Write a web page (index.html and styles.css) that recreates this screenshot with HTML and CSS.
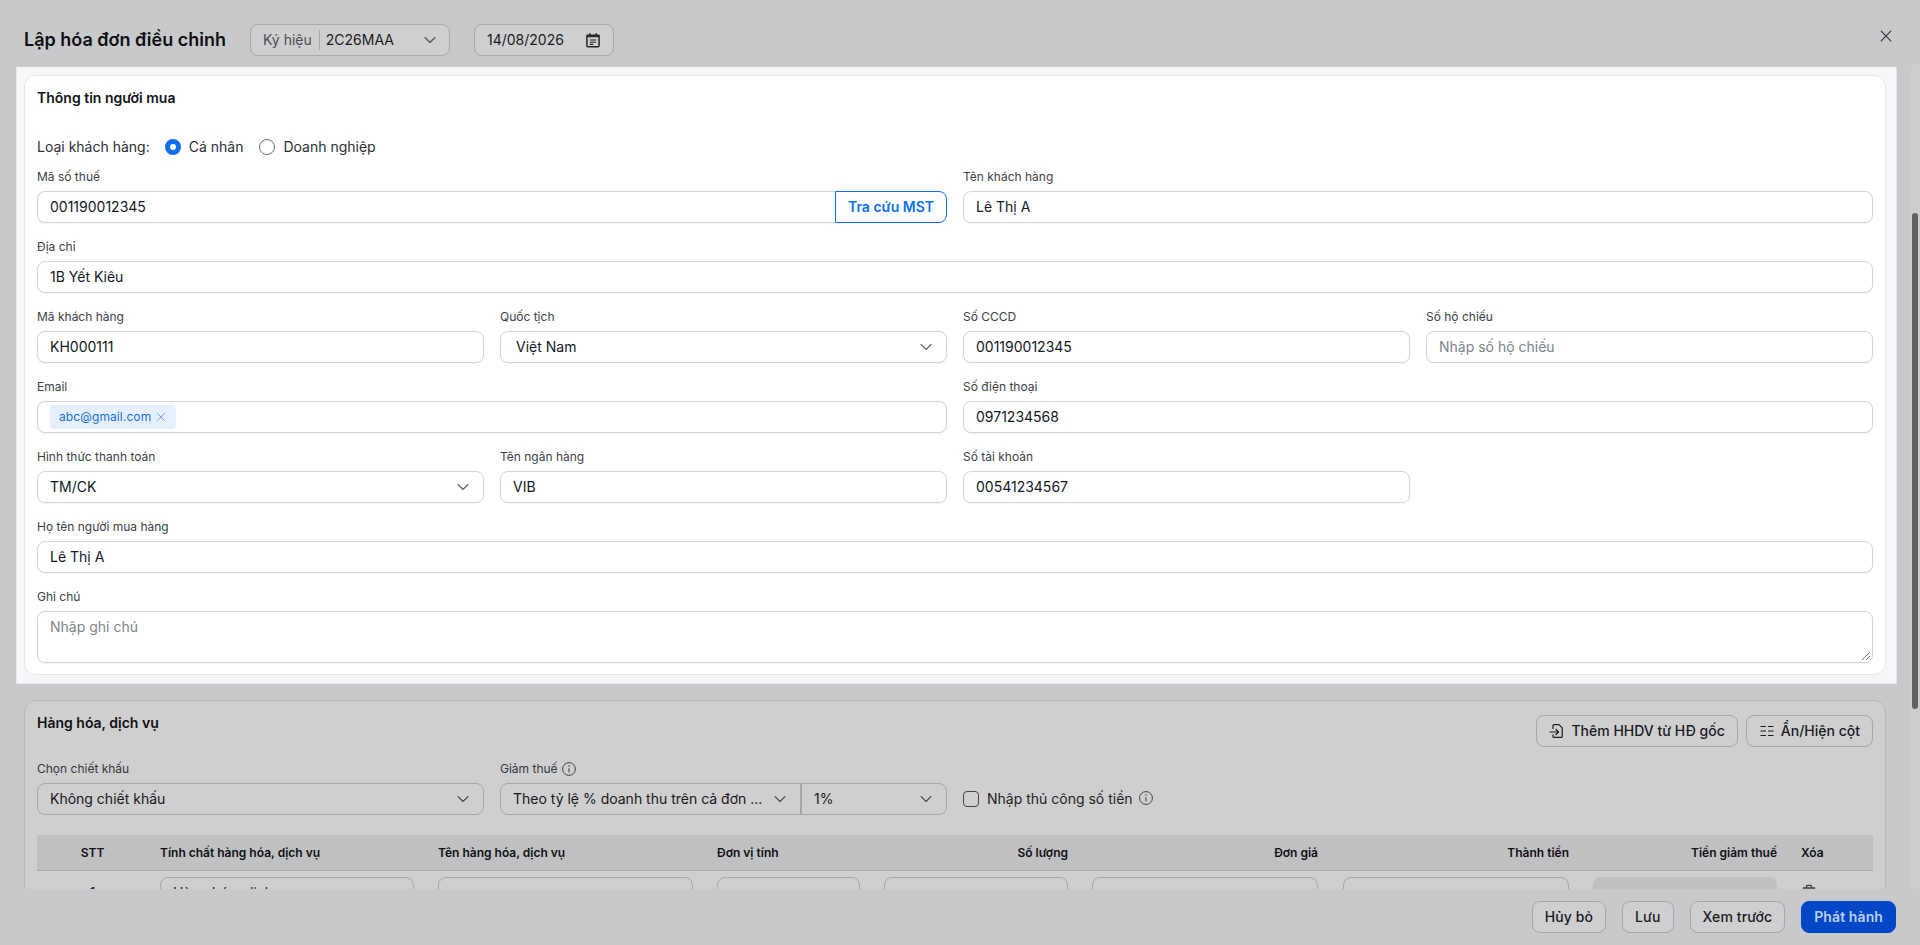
FILE: index.html
```html
<!DOCTYPE html>
<html lang="vi">
<head>
<meta charset="utf-8">
<title>Lập hóa đơn điều chỉnh</title>
<link rel="stylesheet" href="styles.css">
</head>
<body>
<svg class="sprite" aria-hidden="true">
  <symbol id="i-chev" viewBox="0 0 16 16"><path d="M3 5.5l5 5 5-5" fill="none" stroke="currentColor" stroke-width="1.1" stroke-linecap="round" stroke-linejoin="round"/></symbol>
  <symbol id="i-x" viewBox="0 0 16 16"><path d="M3.2 3.2l9.6 9.6M12.8 3.2l-9.6 9.6" fill="none" stroke="currentColor" stroke-width="1.2" stroke-linecap="round"/></symbol>
  <symbol id="i-cal" viewBox="0 0 16 16"><path d="M2.5 3.2h11a.6.6 0 0 1 .6.6v10a1 1 0 0 1-1 1H2.9a1 1 0 0 1-1-1v-10a.6.6 0 0 1 .6-.6zM4.8 1.2v3M11.2 1.2v3" fill="none" stroke="currentColor" stroke-width="1.5"/><path d="M2 3h12v2.2H2z" fill="currentColor"/><path d="M4.8 8h6.4M4.8 10.2h6.4M4.8 12.4h3.4" fill="none" stroke="currentColor" stroke-width="1.1"/></symbol>
  <symbol id="i-info" viewBox="0 0 16 16"><circle cx="8" cy="8" r="6.4" fill="none" stroke="currentColor" stroke-width="1"/><path d="M8 7.2v4" fill="none" stroke="currentColor" stroke-width="1.1"/><circle cx="8" cy="5" r=".8" fill="currentColor"/></symbol>
  <symbol id="i-import" viewBox="0 0 16 16"><path d="M4 6V2.6a1 1 0 0 1 1-1h5l3.2 3.2v8.6a1 1 0 0 1-1 1H5a1 1 0 0 1-1-1V11.5" fill="none" stroke="currentColor" stroke-width="1.2" stroke-linejoin="round"/><path d="M1 9h8.4M7 6.5L9.5 9 7 11.5" fill="none" stroke="currentColor" stroke-width="1.2" stroke-linecap="round" stroke-linejoin="round"/></symbol>
  <symbol id="i-cols" viewBox="0 0 16 16"><path d="M1.5 3.5h5.5M9 3.5h5.5M1.5 8h5.5M9 8h5.5M1.5 12.5h5.5M9 12.5h5.5" fill="none" stroke="currentColor" stroke-width="1.1"/></symbol>
  <symbol id="i-trash" viewBox="0 0 16 16"><path d="M1.8 4h12.4M5.5 3.6V2.4a1 1 0 0 1 1-1h3a1 1 0 0 1 1 1v1.2" fill="none" stroke="currentColor" stroke-width="1.3"/><path d="M3 5h10l-.7 9a1 1 0 0 1-1 1H4.7a1 1 0 0 1-1-1z" fill="currentColor"/></symbol>
</svg>

<header class="topbar">
  <h1 class="title">Lập hóa đơn điều chỉnh</h1>
  <div class="pill pill-symbol">
    <span class="pill-label">Ký hiệu</span>
    <span class="pill-value">2C26MAA</span>
    <svg class="icon-16 pill-chev"><use href="#i-chev"/></svg>
  </div>
  <div class="pill pill-date">
    <span>14/08/2026</span>
    <svg class="icon-16 icon-cal"><use href="#i-cal"/></svg>
  </div>
  <svg class="icon-16 close"><use href="#i-x"/></svg>
</header>

<main class="body">
  <div class="spotlight">
    <section class="card card-buyer">
      <h2 class="card-title">Thông tin người mua</h2>
      <div class="cust-type">
        <span>Loại khách hàng:</span>
        <span class="radio radio-on"></span><span class="radio-text">Cá nhân</span>
        <span class="radio"></span><span class="radio-text">Doanh nghiệp</span>
      </div>
      <div class="form-grid">
        <div class="field span-2">
          <div class="label">Mã số thuế</div>
          <div class="joined">
            <div class="box box-left">001190012345</div>
            <div class="lookup">Tra cứu MST</div>
          </div>
        </div>
        <div class="field span-2">
          <div class="label">Tên khách hàng</div>
          <div class="box">Lê Thị A</div>
        </div>
        <div class="field span-4">
          <div class="label">Địa chỉ</div>
          <div class="box">1B Yết Kiêu</div>
        </div>
        <div class="field">
          <div class="label">Mã khách hàng</div>
          <div class="box">KH000111</div>
        </div>
        <div class="field">
          <div class="label">Quốc tịch</div>
          <div class="box box-select box-country">Việt Nam<svg class="icon-16 chev"><use href="#i-chev"/></svg></div>
        </div>
        <div class="field">
          <div class="label">Số CCCD</div>
          <div class="box">001190012345</div>
        </div>
        <div class="field">
          <div class="label">Số hộ chiếu</div>
          <div class="box placeholder">Nhập số hộ chiếu</div>
        </div>
        <div class="field span-2">
          <div class="label">Email</div>
          <div class="box box-tags">
            <span class="tag">abc@gmail.com<svg class="tag-x"><use href="#i-x"/></svg></span>
          </div>
        </div>
        <div class="field span-2">
          <div class="label">Số điện thoại</div>
          <div class="box">0971234568</div>
        </div>
        <div class="field">
          <div class="label">Hình thức thanh toán</div>
          <div class="box box-select">TM/CK<svg class="icon-16 chev"><use href="#i-chev"/></svg></div>
        </div>
        <div class="field">
          <div class="label">Tên ngân hàng</div>
          <div class="box">VIB</div>
        </div>
        <div class="field span-2">
          <div class="label">Số tài khoản</div>
          <div class="box half">00541234567</div>
        </div>
        <div class="field span-4">
          <div class="label">Họ tên người mua hàng</div>
          <div class="box">Lê Thị A</div>
        </div>
        <div class="field span-4">
          <div class="label">Ghi chú</div>
          <div class="box area placeholder">Nhập ghi chú
            <svg class="grip" viewBox="0 0 10 10"><path d="M9 1L1 9M9 5L5 9" fill="none" stroke="#6b7280" stroke-width="1"/></svg>
          </div>
        </div>
      </div>
    </section>
  </div>

  <section class="card card-dim">
    <div class="goods-head">
      <h2 class="card-title">Hàng hóa, dịch vụ</h2>
      <div class="goods-actions">
        <div class="btn btn-tool"><svg class="icon-16"><use href="#i-import"/></svg>Thêm HHDV từ HĐ gốc</div>
        <div class="btn btn-tool"><svg class="icon-16"><use href="#i-cols"/></svg>Ẩn/Hiện cột</div>
      </div>
    </div>
    <div class="options">
      <div class="field">
        <div class="label">Chọn chiết khấu</div>
        <div class="box box-select">Không chiết khấu<svg class="icon-16 chev"><use href="#i-chev"/></svg></div>
      </div>
      <div class="field">
        <div class="label label-info">Giảm thuế <svg class="icon-info"><use href="#i-info"/></svg></div>
        <div class="split">
          <div class="split-a">Theo tỷ lệ % doanh thu trên cả đơn ...<svg class="icon-16 chev"><use href="#i-chev"/></svg></div>
          <div class="split-b">1%<svg class="icon-16 chev"><use href="#i-chev"/></svg></div>
        </div>
      </div>
      <div class="manual span-2">
        <span class="check"></span>
        <span>Nhập thủ công số tiền</span>
        <svg class="icon-info"><use href="#i-info"/></svg>
      </div>
    </div>
    <div class="tbl">
      <div class="tbl-row tbl-head">
        <div class="center">STT</div>
        <div>Tính chất hàng hóa, dịch vụ</div>
        <div>Tên hàng hóa, dịch vụ</div>
        <div>Đơn vị tính</div>
        <div class="right">Số lượng</div>
        <div class="right cell-price">Đơn giá</div>
        <div class="right">Thành tiền</div>
        <div class="right">Tiền giảm thuế</div>
        <div>Xóa</div>
      </div>
      <div class="tbl-row tbl-body">
        <div class="center">1</div>
        <div class="box box-select">Hàng hóa, dịch vụ</div>
        <div class="box"></div>
        <div class="box"></div>
        <div class="box"></div>
        <div class="box cell-price"></div>
        <div class="box"></div>
        <div class="box box-off"></div>
        <div class="trash"><svg class="icon-16"><use href="#i-trash"/></svg></div>
      </div>
    </div>
  </section>
</main>

<div class="scrollbar"><div class="thumb"></div></div>

<footer class="footer">
  <div class="btn">Hủy bỏ</div>
  <div class="btn">Lưu</div>
  <div class="btn">Xem trước</div>
  <div class="btn btn-primary">Phát hành</div>
</footer>
</body>
</html>
```

FILE: styles.css
```css
* { box-sizing: border-box; }

html, body {
  margin: 0;
  height: 100%;
  overflow: hidden;
}

body {
  display: flex;
  flex-direction: column;
  background: #c8c9cb;
  color: #111827;
  font: 14px/20px "Inter", "Noto Sans", sans-serif;
  position: relative;
}

.sprite { display: none; }

.icon-16 { width: 16px; height: 16px; flex: none; }
.icon-info { width: 16px; height: 16px; flex: none; color: #3f4247; }

/* top bar */
.topbar {
  flex: none;
  height: 67px;
  display: flex;
  align-items: flex-start;
  padding: 24px 26px 0 24px;
  gap: 24px;
}

.title {
  margin: 0;
  font-size: 18px;
  font-weight: 600;
  line-height: 32px;
  color: #0e0f11;
  width: 202px;
  white-space: nowrap;
}

.pill {
  height: 32px;
  display: flex;
  align-items: center;
  background: #cfcfd0;
  border: 1px solid #a9aab0;
  border-radius: 8px;
  color: #1a1c1f;
}

.pill-symbol { width: 200px; padding: 0 11px 0 12px; }

.pill-label {
  color: #4b4e54;
  padding-right: 7px;
  border-right: 1px solid #a9aab0;
  line-height: 20px;
  margin-right: 6px;
}

.pill-value { flex: 1; }
.pill-chev { color: #4b4e54; }

.pill-date {
  width: 140px;
  padding: 0 12px;
  justify-content: space-between;
}

.icon-cal { color: #25272b; }

.close {
  margin-left: auto;
  margin-top: 4px;
  color: #33363b;
}

.body {
  flex: 1;
  min-height: 0;
  overflow: hidden;
  padding: 0 24px 0 17px;
}

.spotlight {
  width: 1879px;
  background: #f5f6f8;
  padding: 8px 10px 8px 7px;
  box-shadow: 0 0 0 1px #e4e5e8;
}

.card {
  width: 1862px;
  border: 1px solid #e5e7eb;
  border-radius: 12px;
  padding: 12px;
  background: #fff;
}

.card-buyer { padding-bottom: 11px; }

.card-title {
  margin: 0;
  font-size: 14px;
  font-weight: 600;
  line-height: 20px;
  color: #111318;
}

.cust-type {
  display: flex;
  align-items: center;
  margin-top: 29px;
  height: 20px;
  color: #2b2f36;
}

.radio {
  width: 16px;
  height: 16px;
  border: 1px solid #6b7280;
  border-radius: 50%;
  background: #fff;
}

.radio-on {
  margin-left: 15px;
  border: 5px solid #0b6ff0;
}

.radio + .radio-text { margin-left: 8px; }
.radio-text + .radio { margin-left: 16px; }

.form-grid {
  display: grid;
  grid-template-columns: repeat(4, 447px);
  gap: 14px 16px;
  margin-top: 10px;
}

.span-2 { grid-column: span 2; }
.span-4 { grid-column: span 4; }

.label {
  font-size: 12px;
  line-height: 20px;
  margin-bottom: 4px;
  color: #3c4149;
}

.box {
  height: 32px;
  display: flex;
  align-items: center;
  padding: 0 12px;
  background: #fff;
  border: 1px solid #d1d5db;
  border-radius: 8px;
  box-shadow: 0 1px 2px rgba(16, 24, 40, .05);
  color: #111827;
  white-space: nowrap;
  overflow: hidden;
}

.box-select {
  justify-content: space-between;
  padding-right: 12px;
}

.box-country { padding-left: 15px; }

.chev { color: #5d626b; margin-left: auto; }

.placeholder { color: #7e838c; }

.half { width: 447px; }

.joined { display: flex; }

.box-left {
  flex: 1;
  border-radius: 8px 0 0 8px;
  border-right: 0;
}

.lookup {
  width: 112px;
  height: 32px;
  display: flex;
  align-items: center;
  justify-content: center;
  border: 1px solid #0b6ff0;
  border-radius: 0 8px 8px 0;
  background: #fff;
  color: #0b6ff0;
  font-weight: 600;
}

.box-tags { padding: 0 12px; }

.tag {
  height: 24px;
  display: inline-flex;
  align-items: center;
  gap: 4px;
  padding: 0 9px;
  border-radius: 4px;
  background: #e6f0fc;
  color: #1870e0;
  font-size: 12px;
  letter-spacing: .1px;
}

.tag-x { width: 12px; height: 12px; color: #5f9ce8; }

.area {
  height: 52px;
  align-items: flex-start;
  padding-top: 5px;
  position: relative;
}

.grip {
  position: absolute;
  right: 1px;
  bottom: 1px;
  width: 10px;
  height: 10px;
}

/* dimmed section under the overlay */
.card-dim {
  margin-top: 17px;
  margin-left: 7px;
  background: #cfcfcf;
  border-color: #b7b8bc;
}

.card-dim .card-title { color: #101114; }
.card-dim .label { color: #35383d; }

.card-dim .box {
  background: #cfcfcf;
  border-color: #a6a7ac;
  box-shadow: none;
  color: #16181b;
}

.card-dim .chev { color: #4b4e54; }

.goods-head {
  display: flex;
  justify-content: space-between;
  height: 34px;
}

.goods-actions {
  display: flex;
  gap: 8px;
  padding-top: 2px;
}

.btn {
  height: 32px;
  display: flex;
  align-items: center;
  padding: 0 12px;
  background: #cfcfd0;
  border: 1px solid #a6a7ac;
  border-radius: 8px;
  color: #191b1f;
  font-weight: 500;
  white-space: nowrap;
}

.footer .btn { letter-spacing: .1px; }

.btn-tool { gap: 6px; }

.options {
  display: grid;
  grid-template-columns: repeat(4, 447px);
  gap: 16px;
  margin-top: 12px;
}

.label-info {
  display: flex;
  align-items: center;
  gap: 3px;
}

.split {
  display: flex;
  height: 32px;
  border: 1px solid #a6a7ac;
  border-radius: 8px;
  color: #16181b;
}

.split-a, .split-b {
  display: flex;
  align-items: center;
  padding: 0 12px;
  white-space: nowrap;
}

.split-a {
  width: 301px;
  border-right: 2px solid #a6a7ac;
}

.split-b { flex: 1; }

.manual {
  display: flex;
  align-items: center;
  height: 32px;
  margin-top: 24px;
  color: #1d1f23;
}

.check {
  width: 16px;
  height: 16px;
  margin-right: 8px;
  border: 1px solid #41444a;
  border-radius: 4px;
}

.manual .icon-info { margin-left: 5px; margin-top: -2px; }

.tbl { margin-top: 20px; }

.tbl-row {
  display: grid;
  grid-template-columns: 111px 278px 279px 167px 208px 251px 250px 208px 1fr;
}

.tbl-row > div { margin: 0 12px; }
.tbl-row > .cell-price { margin-right: 13px; }

.tbl-head {
  height: 36px;
  padding-top: 1px;
  align-items: center;
  background: #bfc0c2;
  border-bottom: 1px solid #acadb0;
  font-size: 12px;
  font-weight: 600;
  color: #0f1013;
}

.tbl-body {
  padding-top: 6px;
  align-items: flex-start;
}

.tbl-body .center { line-height: 32px; }

.center { text-align: center; }
.right { text-align: right; }

.card-dim .box-off {
  background: #bfc0c2;
  border-color: #bfc0c2;
}

.trash {
  color: #3a3d42;
  padding-top: 7px;
}

/* custom scrollbar, over the page edge */
.scrollbar {
  position: absolute;
  top: 64px;
  right: 0;
  width: 10px;
  height: 825px;
  padding: 149px 2px 0;
  background: #cbcccd;
  border-radius: 5px 5px 0 0;
}

.thumb {
  height: 496px;
  background: #5f6060;
  border-radius: 3px;
}

/* footer */
.footer {
  flex: none;
  height: 56px;
  display: flex;
  justify-content: flex-end;
  gap: 16px;
  padding: 12px 24px 0 0;
  background: #c8c9cb;
  position: relative;
}

.btn-primary {
  background: #0047c7;
  border-color: #0047c7;
  color: #bcd0f2;
  font-weight: 600;
}
```
